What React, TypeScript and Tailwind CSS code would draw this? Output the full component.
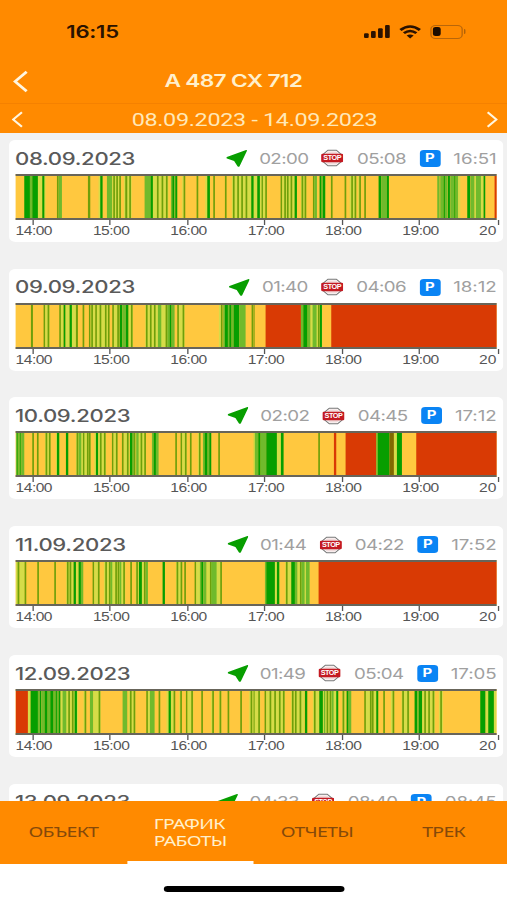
// g - moving, m - frequent short moves, l - mixed, o - single short move,
// d - mixed parking, r - parking. A kind followed by "from-to" or just "from".
const COLORS: Record<string, string> = {
  g: '#079e00',
  m: '#70ba2c',
  l: '#d6dc48',
  o: '#6f9f0a',
  d: '#806a00',
  r: '#d93a04',
};

const days = [
  {
    date: '08.09.2023',
    moving: '02:00',
    stops: '05:08',
    parking: '16:51',
    first:
      'g71-88 m88-95 g95-112 l112-124 g125-132 l132-135 o169 m174-184 o262-269 l294-299 g299-306 m319-335 l335-361 o338 o347 o356 l370-393 o374-380 o386 m432-450 g450-457 l457-503 o469 o483 o496 m511-515 g515-521 m521-524 g524-530 l545-549 o549 o588 l614-619 g620-628 o638 o673 l694-752 o697 o710 o722 o735 g752-762',
    second:
      'l0-12 g11-19 l19-40 o24-28 o35 o81-86 l86-118 o92 o100 o111 l118-123 g123-130 l142-158 o144 o153 o178-182 m182-190 g198-204 m204-208 g208-215 o232 o273 l288-308 o293 o303 l314-320 o317 o332 g375-383 m383-400 g400-406 m551-558 m560-570 g570-574 m574-582 g583-589 m590-602 g602-606 m606-614 l614-620 g641-650 m651-663 l663-690 m667-682 g690-695 r723-731',
  },
  {
    date: '09.09.2023',
    moving: '01:40',
    stops: '04:06',
    parking: '18:12',
    first:
      'o91-97 o129 l134-147 o141 o176 l181-188 g189-195 l195-207 g207-214 l214-226 o226-232 o246 o265 l270-284 o272 o284 l289-324 o297 o313 l319-323 o322 o335 l340-354 o350 g357-365 m365-376 g376-384 l384-397 o391 l434-500 o436 o448 o460 m472-482 o495 m500-507 g507-513 m513-522 o530 l535-552 o546 l655-661 o661 m668-673 g673-682 m682-686 g686-693 m693-699 g699-716 m716-735 o753',
    second:
      'o0-3 r36-142 m142-149 g149-162 m162-171 l171-206 m177-189 o193 g199-205 r233-731',
  },
  {
    date: '10.09.2023',
    moving: '02:02',
    stops: '04:45',
    parking: '17:12',
    first:
      'm46-50 g50-53 m53-59 g59-62 m62-71 o95 o109 l133-149 o135 o145 l166-170 g169-176 g196-203 l226-270 o228 m234-242 o247 l252-258 o259 o265 l281-286 g286-293 l293-316 o298 o310 o334 l339-349 o346 o364 l370-386 o379 g388-396 m396-400 o400 l405-435 m407-414 o420 o431 m454-459 g459-466 m466-474 o524 o540 l545-558 o553 o568 l592-598 o595 m607-612 g612-621 m621-626 g626-632 o653 o760',
    second:
      'l0-4 m4-14 g14-21 m21-38 g38-70 l70-82 g82-90 o194 r241-248 r276-368 m368-373 g373-408 d408-421 l421-430 g430-445 r488-731',
  },
  {
    date: '11.09.2023',
    moving: '01:44',
    stops: '04:22',
    parking: '17:52',
    first:
      'l46-52 o51-57 l57-72 o72 o110 o161 l197-218 o199 o207 g219-226 l227-234 g234-241 m241-248 o276 l281-292 o292 l310-374 o314 o325 m330-335 o344 o351 m357-362 o368 o389 l405-415 o407 g415-424 l424-430 o430 m435-442 g486-493 l526-545 o528 o540 o551 o582 l587-600 m598-602 g602-608 m608-618 l618-663 o628 m632-648 o659',
    second:
      'm34-38 g38-64 l64-78 g70-77 l95-113 o97 g113-124 m124-132 l132-168 o139 m144-153 m157-168 r195-731',
  },
  {
    date: '12.09.2023',
    moving: '01:49',
    stops: '05:04',
    parking: '17:05',
    first:
      'r45-82 l82-90 g90-112 m112-118 g118-122 m122-132 g132-141 m141-149 g149-159 m159-165 g165-169 m169-174 g174-180 l180-232 m186-197 o203 o214 g222-229 l249-256 o252 m268-278 l278-300 o294 m366-380 l384-404 o388 o399 o437 l442-450 m448-462 o474 l498-504 g504-511 l511-522 o519 l536-544 o539 o556 l561-578 o572 o602 l632-640 o635 l655-662 o657 o681 o719 l746-762 o750',
    second:
      'l0-20 o0-3 o14 o33 l38-94 o48 o62 o76 o88 l113-152 o115 o124 o138 g154-161 l178-196 o181 g197-208 l208-252 m211-215 o219 o228 m234-240 g248-254 l266-276 o267 g279-285 m285-293 o332 l337-368 o349 o355 g368-374 o389 l412-422 o417 l444-468 o446 o461 g483-491 m491-496 g496-506 l506-544 o512 o524 o537 l556-568 o560 g680-696 l696-705 g704-721 l721-728',
  },
  {
    date: '13.09.2023',
    moving: '04:33',
    stops: '08:40',
    parking: '08:45',
    first: '',
    second: '',
  },
];

const hours = ['14:00', '15:00', '16:00', '17:00', '18:00', '19:00'];

function Segments({ data, offset }: { data: string; offset: number }) {
  return (
    <g transform={`translate(${offset} 0)`}>
      {data
        .split(' ')
        .filter(Boolean)
        .map((item, index) => {
          const [from, to] = item.slice(1).split('-').map(Number);
          return (
            <rect
              key={index}
              x={from}
              width={(to || from + 5) - from}
              height="42"
              fill={COLORS[item[0]]}
            />
          );
        })}
    </g>
  );
}

function MovingIcon() {
  return (
    <svg className="-mr-[1.2px] h-[17px] w-4" viewBox="0 0 16 17" preserveAspectRatio="none">
      <path
        d="M.5 6.9 15.3 0Q16.2-.1 15.9.9L10.3 16.2Q9.6 17.4 8.7 16.3L6.1 11.1.6 8.5Q-.4 7.7.5 6.9Z"
        fill="#079e00"
      />
    </svg>
  );
}

function StopIcon() {
  return (
    <svg className="h-[18px] w-[17px]" viewBox="0 0 17 18" preserveAspectRatio="none">
      <path
        d="M5.3 1.2h6.4l4.1 4.4v6.8l-4.1 4.4H5.3L1.2 12.4V5.6Z"
        fill="#fff"
        stroke="#777"
        strokeWidth=".9"
      />
      <path d="M5.6 2.5h5.8l2.5 2.5H3.1ZM3.1 13h10.8l-2.5 2.5H5.6Z" fill="#f1dcdc" />
      <rect y="4.7" width="17" height="8.6" rx="1.2" fill="#c41a22" />
      <text
        x="8.5"
        y="11.4"
        textAnchor="middle"
        textLength="13.6"
        lengthAdjust="spacingAndGlyphs"
        fill="#fff"
        fontSize="6.8"
        fontWeight="700"
        fontFamily="Liberation Sans, sans-serif"
      >
        STOP
      </text>
    </svg>
  );
}

function DayCard({ day }: { day: (typeof days)[number] }) {
  return (
    <div className="h-[102px] shrink-0 rounded-[5px] bg-white px-[5px]">
      <div className="flex h-[34px] items-center justify-between pt-[3px]">
        <h2 className="pt-[2px] text-[17px] font-medium tracking-[-0.25px] text-[#5a5a5a]">
          {day.date}
        </h2>
        <div className="flex items-center gap-[10.2px] pt-[0.5px] text-[14.4px] tracking-[-0.45px] text-[#a0a0a0]">
          <MovingIcon />
          <span>{day.moving}</span>
          <StopIcon />
          <span>{day.stops}</span>
          <span className="flex h-[17px] w-4 items-center justify-center rounded-[3px] bg-[#0a84f4] text-[11.5px] leading-[17px] font-bold text-white">
            P
          </span>
          <span className="tracking-[-0.05px]">{day.parking}</span>
        </div>
      </div>
      <div className="h-[46px] border-y-2 border-[#68655a] bg-[#ffc83f]">
        <svg className="block h-full w-full" viewBox="0 0 1445 42" preserveAspectRatio="none">
          <Segments data={day.first} offset={-45} />
          <Segments data={day.second} offset={714} />
        </svg>
      </div>
      {/* Hour scale */}
      <div className="flex justify-between">
        <div className="flex">
          {hours.map((hour) => (
            <div key={hour} className="flex w-[59.5px] flex-col items-start">
              <span className="ml-[13px] h-[5px] w-px bg-[#555]" />
              <span className="w-[29px] text-center font-['Liberation_Sans',sans-serif] text-[12px] leading-[12px] tracking-[-0.4px] text-[#555]">
                {hour}
              </span>
            </div>
          ))}
        </div>
        <div className="flex flex-col items-end">
          <span className="mr-[1px] h-[5px] w-px bg-[#555]" />
          <span className="pr-[3px] font-['Liberation_Sans',sans-serif] text-[12px] leading-[12px] text-[#555]">
            20
          </span>
        </div>
      </div>
    </div>
  );
}

function Chevron({ className, flip }: { className: string; flip?: boolean }) {
  return (
    <svg className={className} viewBox="0 0 12 20" preserveAspectRatio="none" fill="none">
      <path
        d={flip ? 'M1.5 1.5 10.5 10 1.5 18.5' : 'M10.5 1.5 1.5 10 10.5 18.5'}
        stroke="#fff6e0"
        strokeWidth="2.2"
      />
    </svg>
  );
}

function StatusBar() {
  return (
    <div className="flex h-[57px] items-end justify-between pr-[32px] pb-[14px] pl-[51px]">
      <span className="pt-px text-[17px] leading-[22px] font-semibold tracking-[-0.2px] text-[#2a1200]">
        16:15
      </span>
      <div className="flex h-[23px] items-center gap-[7px]">
        <svg className="h-[13px] w-5" viewBox="0 0 20 14" preserveAspectRatio="none" fill="#2a1200">
          <rect x="0" y="9" width="3.6" height="5" rx="1" />
          <rect x="5.4" y="6.5" width="3.6" height="7.5" rx="1" />
          <rect x="10.8" y="3.5" width="3.6" height="10.5" rx="1" />
          <rect x="16.2" y="0" width="3.6" height="14" rx="1" />
        </svg>
        <svg className="h-[14px] w-[17px]" viewBox="0 0 17 14" fill="none" stroke="#2a1200">
          <path d="M1 5Q8.5-2 16 5" strokeWidth="2.4" />
          <path d="M3.7 8.2Q8.5 3.8 13.3 8.2" strokeWidth="2.3" />
          <path d="M5.8 10.6Q8.5 8.4 11.2 10.6L8.5 13.6Z" fill="#2a1200" stroke="none" />
        </svg>
        <div className="flex items-center gap-px">
          <div className="h-[14px] w-[25px] rounded-[4px] border border-[#b8660a] p-[1.5px]">
            <div className="h-full w-[5.5px] rounded-[2px] bg-[#1c0c00]" />
          </div>
          <div className="h-[5px] w-[1.5px] rounded-r bg-[#a85d08]" />
        </div>
      </div>
    </div>
  );
}

const tabs = ['ОБЪЕКТ', 'ГРАФИК РАБОТЫ', 'ОТЧЕТЫ', 'ТРЕК'];

export default function App() {
  return (
    <div className="h-[900px] w-[507px] overflow-hidden">
      <div className="flex h-full w-[390px] origin-top-left scale-x-130 flex-col bg-[#f1f1f1] font-['Inter',sans-serif]">
        <header className="shrink-0 bg-[#ff8a00]">
          <StatusBar />
          <div className="flex h-[47px] items-center border-b border-[#f58100] px-[9.5px] pt-[2px]">
            <Chevron className="h-[23px] w-3" />
            <h1 className="w-[316px] text-center text-[17.5px] font-semibold tracking-[-0.55px] text-[#fff0cc]">
              А 487 СХ 712
            </h1>
          </div>
          <div className="flex h-[29px] items-center justify-between pt-px pr-[7px] pl-[8.5px]">
            <Chevron className="h-[17px] w-[9px]" />
            <span className="font-['Roboto',sans-serif] text-[18px] tracking-[-0.25px] text-[#ffe8b8]">
              08.09.2023 - 14.09.2023
            </span>
            <Chevron className="h-[17px] w-[9px]" flip />
          </div>
        </header>

        <main className="flex min-h-0 flex-1 flex-col gap-[26.75px] overflow-hidden pt-[6.75px] pr-[3px] pl-[6.5px]">
          {days.map((day) => (
            <DayCard key={day.date} day={day} />
          ))}
        </main>

        <nav className="grid h-[63px] shrink-0 grid-cols-4 bg-[#ff8a00]">
          {tabs.map((tab, index) => (
            <div
              key={tab}
              className={`flex items-center justify-center border-b-[3px] pt-[2px] font-['Noto_Sans',sans-serif] text-[15px] leading-[17.5px] tracking-[-0.55px] ${
                index === 1 ? 'border-white text-[#fff0cc]' : 'border-transparent text-[#85490a]'
              }`}
            >
              <span className="w-min">{tab}</span>
            </div>
          ))}
        </nav>
        <footer className="flex h-9 shrink-0 justify-center bg-white pt-[22px]">
          <div className="h-[6px] w-[139px] rounded-full bg-black" />
        </footer>
      </div>
    </div>
  );
}
